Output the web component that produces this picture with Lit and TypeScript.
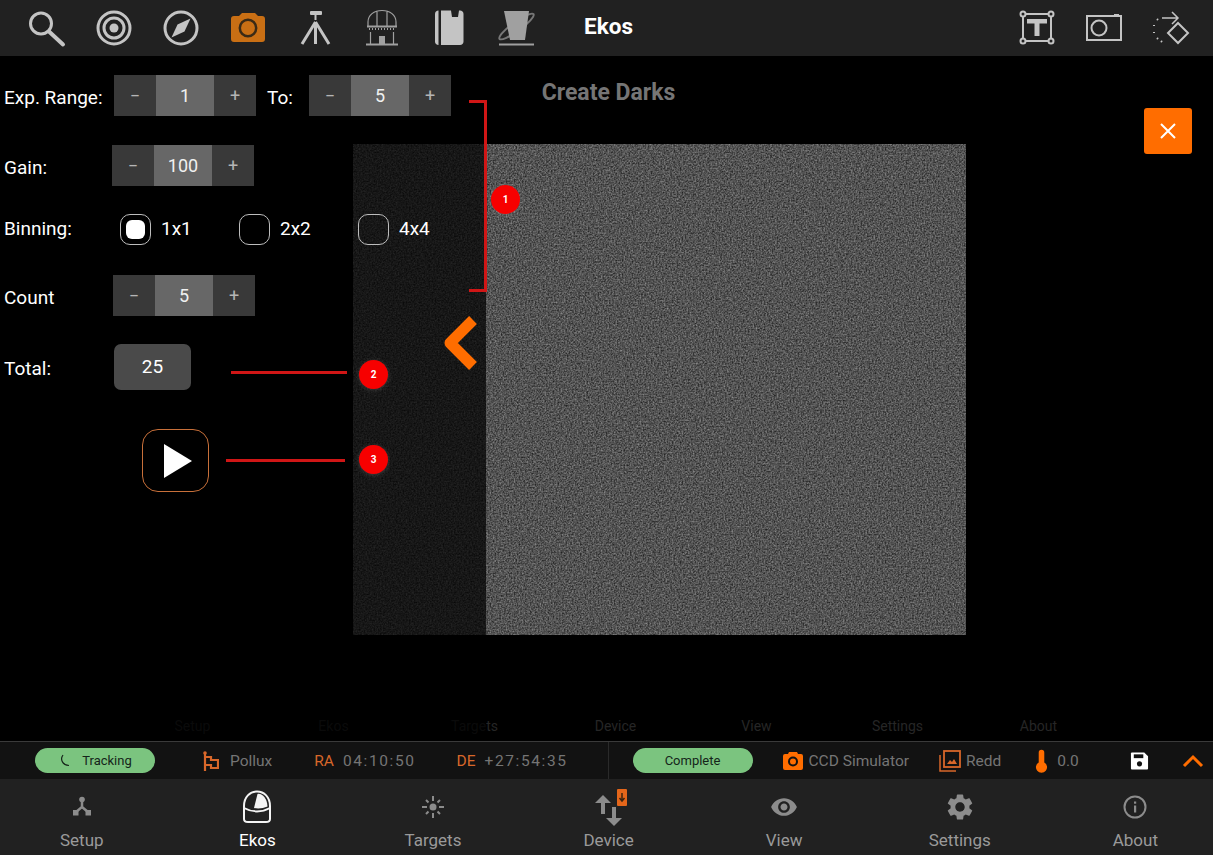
import { LitElement, css, html } from 'lit';
import { customElement } from 'lit/decorators.js';

const topIcons = [
  html`<svg viewBox="0 0 40 40"><circle cx="14" cy="15.5" r="10.5" class="line w3"/><path d="M22 23.5 36 36.5" class="line w4"/></svg>`,
  html`<svg viewBox="0 0 40 40"><circle cx="20" cy="20" r="16" class="line w3"/><circle cx="20" cy="20" r="10" class="line w3"/><circle cx="20" cy="20" r="4.5" class="solid"/></svg>`,
  html`<svg viewBox="0 0 40 40"><circle cx="20" cy="20" r="16" class="line w3"/><path d="M29.5 10.5 23.5 23.5 10.5 29.5 16.5 16.5Z" class="solid"/></svg>`,
  html`<svg viewBox="0 0 40 40" class="on"><path d="M3 11a3 3 0 0 1 3-3h5l2-2 1-1h13l1 1 2 2h4a3 3 0 0 1 3 3v20a3 3 0 0 1-3 3H6a3 3 0 0 1-3-3Z" class="solid"/><circle cx="20" cy="20" r="8.2" class="ring"/></svg>`,
  html`<svg viewBox="0 0 40 40"><rect x="15" y="3" width="12" height="4" rx="1" class="solid"/><rect x="19.500" y="7" width="2" height="5" class="solid"/><path d="M20.500 14 7 36M20.500 14V36M20.500 14 34 36" class="line w3"/></svg>`,
  html`<svg viewBox="0 0 40 40" class="dim"><path d="M6 18V14C6 7 12 2.500 20 2.500S34 7 34 14V18M15 3V18M25 3V18M8.500 24V36M31.500 24V36" class="line w12"/><path d="M5 18.500H35" class="line w2"/><path d="M7 21H33" class="line w2 dash"/><rect x="17" y="28" width="6" height="8" class="solid"/><path d="M4 36.500H36" class="line w2"/></svg>`,
  html`<svg viewBox="0 0 40 40"><path d="M9.500 2.500V37C7.500 37 6 35.500 6 33.500V6C6 4 7.500 2.500 9.500 2.500Z" class="solid"/><path d="M12 2.500H22L23 9H29L30 2.500H31C33 2.500 34.500 4 34.500 6V33.500C34.500 35.500 33 37 31 37H12Z" class="solid"/></svg>`,
  html`<svg viewBox="0 0 40 40" class="dim"><ellipse cx="20.500" cy="18.500" rx="21" ry="4.500" transform="rotate(-36 20.500 18.500)" class="line w2 orbit"/><path d="M8 3H33L29 32H14Z" class="solid"/><path d="M3 36.500H38" class="line w2"/></svg>`,
];

const rightIcons = [
  html`<svg viewBox="0 0 40 40"><rect x="6" y="6" width="28" height="27" class="line w2"/><circle cx="6" cy="6" r="2.500" class="dot"/><circle cx="34" cy="6" r="2.500" class="dot"/><circle cx="6" cy="33" r="2.500" class="dot"/><circle cx="34" cy="33" r="2.500" class="dot"/><rect x="10" y="11" width="20" height="4.500" class="solid"/><rect x="17.500" y="11" width="5" height="17" class="solid"/></svg>`,
  html`<svg viewBox="0 0 40 40"><rect x="3" y="8" width="34" height="24" class="line w2"/><rect x="30" y="6" width="5" height="2" class="solid"/><circle cx="15" cy="20" r="7.500" class="line w2"/></svg>`,
  html`<svg viewBox="0 0 40 40"><path d="M27 15 37 25 27 35 17 25Z" class="line w2"/><path d="M11 10H27M21 4 27 10 21 16" class="line w15"/><path d="M6 11 7 12M3 17V18M3 24V25M6 30 7 31M10 33 11 34" class="line w2"/></svg>`,
];

const navIcons = [
  html`<svg viewBox="0 0 34 34"><circle cx="17" cy="9.500" r="2.800" class="solid"/><path d="M17 11V17L11 22M17 17 23 22" class="line w25"/><rect x="8" y="20" width="5.500" height="5.500" class="solid"/><rect x="20.500" y="20" width="5.500" height="5.500" class="solid"/></svg>`,
  html`<svg viewBox="0 0 34 34" class="bright"><path d="M4 16C4 7 10 1.500 17 1.500S30 7 30 16V29C30 31 28 32 26 32H8C6 32 4 31 4 29Z" class="line w2"/><path d="M4 18C12 22.500 22 22.500 30 18" class="line w2"/><path d="M14 18 17.500 4C22 3 27 8 27.500 16.500 23 18.500 18 19 14 18Z" class="solid"/></svg>`,
  html`<svg viewBox="0 0 34 34"><circle cx="17" cy="17" r="3.500" class="solid"/><path d="M17 6V11M17 23V28M6 17H11M23 17H28M10 10 12.500 12.500M24 10 21.500 12.500M10 24 12.500 21.500M24 24 21.500 21.500" class="line w2"/></svg>`,
  html`<svg viewBox="0 0 50 40" class="device"><path d="M19 8 11 16H17V27H21V16H27Z" class="solid"/><path d="M30 39 38 31H32V20H28V31H22Z" class="solid"/><rect x="33" y="2" width="10" height="17" rx="1" class="orange"/><path d="M38 6V13M35.500 11 38 14 40.500 11" class="badge-arrow"/></svg>`,
  html`<svg viewBox="-2.500 -2.500 29 29"><path class="solid" d="M12 4.500C7 4.500 2.730 7.610 1 12c1.730 4.390 6 7.500 11 7.500s9.270-3.110 11-7.500c-1.730-4.390-6-7.500-11-7.500zM12 17c-2.760 0-5-2.240-5-5s2.240-5 5-5 5 2.240 5 5-2.240 5-5 5zm0-8c-1.660 0-3 1.340-3 3s1.340 3 3 3 3-1.340 3-3-1.340-3-3-3z"/></svg>`,
  html`<svg viewBox="-1 -1 26 26"><path class="solid" d="M19.140 12.940c.04-.3.06-.61.06-.94 0-.32-.02-.64-.07-.94l2.030-1.580c.18-.14.23-.41.12-.61l-1.920-3.320c-.12-.22-.37-.29-.59-.22l-2.390.96c-.5-.38-1.030-.7-1.620-.94l-.36-2.540c-.04-.24-.24-.41-.48-.41h-3.840c-.24 0-.43.17-.47.41l-.36 2.540c-.59.24-1.130.57-1.620.94l-2.390-.96c-.22-.08-.47 0-.59.22L2.740 8.870c-.12.21-.08.47.12.61l2.030 1.580c-.05.3-.09.63-.09.94s.02.64.07.94l-2.030 1.580c-.18.14-.23.41-.12.61l1.920 3.320c.12.22.37.29.59.22l2.390-.96c.5.38 1.030.7 1.620.94l.36 2.540c.05.24.24.41.48.41h3.840c.24 0 .44-.17.47-.41l.36-2.540c.59-.24 1.130-.56 1.620-.94l2.390.96c.22.08.47 0 .59-.22l1.920-3.320c.12-.22.07-.47-.12-.61l-2.010-1.580zM12 15.600c-1.980 0-3.600-1.620-3.600-3.600s1.620-3.600 3.600-3.600 3.600 1.620 3.600 3.600-1.620 3.600-3.600 3.600z"/></svg>`,
  html`<svg viewBox="0 0 34 34"><circle cx="17" cy="17" r="10.500" class="line w2"/><rect x="16" y="15.500" width="2.200" height="7" class="solid"/><rect x="16" y="11.500" width="2.200" height="2.200" class="solid"/></svg>`,
];

const navItems = ['Setup', 'Ekos', 'Targets', 'Device', 'View', 'Settings', 'About'];

@customElement('app-root')
export class AppRoot extends LitElement {
  static styles = css`
    :host {
      display: flex;
      flex-direction: column;
      width: 1213px;
      height: 855px;
      overflow: hidden;
      background: #000;
      font-family: Roboto, 'Liberation Sans', sans-serif;
      color: #fff;
    }

    svg .line { fill: none; stroke: currentColor; }
    svg .solid { fill: currentColor; }
    svg .w12 { stroke-width: 1.2; }
    svg .w15 { stroke-width: 1.5; }
    svg .w2 { stroke-width: 2; }
    svg .w25 { stroke-width: 2.5; }
    svg .w3 { stroke-width: 3; }
    svg .w4 { stroke-width: 4; stroke-linecap: round; }
    svg .dash { stroke-dasharray: 1 2; }
    svg .orbit { stroke: #777; }
    svg .dot { fill: #212121; stroke: currentColor; stroke-width: 2; }
    svg .ring { fill: none; stroke: #3a2a16; stroke-width: 2.5; }
    svg .orange { fill: #e4661a; }
    svg .badge-arrow { fill: none; stroke: #3a2410; stroke-width: 1.5; }

    .topbar {
      flex: none;
      height: 56px;
      display: flex;
      align-items: center;
      padding-left: 13px;
      background: #212121;
    }
    .topicon {
      width: 67px;
      height: 56px;
      display: flex;
      align-items: center;
      justify-content: center;
      color: #c4c4c4;
    }
    .topicon svg { width: 40px; height: 40px; }
    .topicon svg.on { color: #c96f14; }
    .topicon svg.dim { color: #a0a0a0; }
    .app-title {
      margin: -4px 0 0 35px;
      font-size: 22.5px;
      font-weight: 700;
    }
    .topright {
      margin-left: auto;
      margin-right: 9px;
      display: flex;
    }

    .main {
      flex: 1;
      position: relative;
      display: flex;
      flex-direction: column;
      background: #000;
    }
    .dialog-title {
      margin: 22px 0 0;
      height: 28px;
      text-align: center;
      padding-left: 4px;
      font-size: 23px;
      line-height: 30px;
      font-weight: 700;
      color: #757575;
    }
    .picture {
      margin: 38px 0 0 353px;
      width: 613px;
      height: 491px;
      display: block;
    }
    .ghost {
      margin: auto 0 8px 122px;
      display: grid;
      grid-template-columns: repeat(7, 141px);
      height: 14px;
      font-size: 14px;
      line-height: 14px;
      text-align: center;
      color: #262626;
    }

    .drawer {
      position: absolute;
      left: 0;
      top: 0;
      bottom: 0;
      width: 486px;
      box-sizing: border-box;
      padding: 19px 0 0 4px;
      display: flex;
      flex-direction: column;
      background: rgba(0, 0, 0, 0.72);
      font-size: 19px;
    }
    .row {
      display: flex;
      align-items: center;
      height: 41px;
    }
    .row.gain { margin-top: 29px; }
    .row.binning { margin-top: 28px; height: 31px; }
    .row.count { margin-top: 30px; }
    .row.total { margin-top: 28px; height: 46px; }
    .label { width: 110px; flex: none; margin-top: 4px; }
    .gain .label { width: 108px; }
    .count .label { width: 109px; }
    .binning .label { width: 116px; margin-top: -2px; }
    .total .label { margin-top: 2px; }
    .to-label { margin: 4px 15px 0 11px; width: 27px; }

    .stepper {
      display: grid;
      grid-template-columns: 42px 58px 42px;
      height: 41px;
      line-height: 41px;
      text-align: center;
      background: #393939;
      color: #b5b5b5;
      font-size: 18px;
    }
    .stepper b {
      font-weight: 400;
      font-size: 18px;
      background: #676767;
      color: #f0f0f0;
    }

    .bin {
      display: flex;
      align-items: center;
      width: 119px;
      line-height: 27px;
    }
    .box {
      width: 31px;
      height: 31px;
      box-sizing: border-box;
      border: 1px solid #bdbdbd;
      border-radius: 10px;
      margin-right: 10px;
      padding: 5px;
    }
    .box span {
      display: block;
      width: 100%;
      height: 100%;
      background: #fff;
      border-radius: 6px;
    }
    .bin-text { margin-top: -3px; }

    .total-value {
      width: 77px;
      height: 46px;
      line-height: 46px;
      text-align: center;
      background: #4a4a4a;
      border-radius: 7px;
    }
    .play {
      margin: 39px 0 0 138px;
      width: 67px;
      height: 63px;
      box-sizing: border-box;
      border: 1.5px solid #c8703a;
      border-radius: 16px;
      display: flex;
      align-items: center;
      justify-content: center;
    }
    .play svg { width: 30px; height: 36px; fill: #fff; margin-left: 5px; }

    .chevron {
      position: absolute;
      left: 440px;
      top: 258px;
      width: 42px;
      height: 58px;
      fill: none;
      stroke: #ff6d00;
      stroke-width: 11;
      stroke-linejoin: round;
    }
    .close {
      position: absolute;
      left: 1144px;
      top: 52px;
      width: 48px;
      height: 46px;
      border-radius: 3px;
      background: #ff6d00;
      display: flex;
      align-items: center;
      justify-content: center;
    }
    .close svg { width: 16px; height: 16px; stroke: #fff; stroke-width: 2; }

    .bracket {
      position: absolute;
      left: 469px;
      top: 44px;
      width: 15px;
      height: 186px;
      border: 3px solid #d01616;
      border-left: 0;
    }
    .rule {
      position: absolute;
      height: 3px;
      background: #d01616;
    }
    .rule.two { left: 231px; width: 116px; top: 315px; }
    .rule.three { left: 226px; width: 119px; top: 403px; }
    .marker {
      position: absolute;
      width: 29px;
      height: 29px;
      border-radius: 50%;
      background: #f70000;
      box-shadow: 0 1px 5px rgba(255, 255, 255, 0.18);
      text-align: center;
      line-height: 29px;
      font-size: 10px;
      font-weight: 700;
    }
    .marker.one { left: 491px; top: 129px; }
    .marker.two { left: 359px; top: 304px; }
    .marker.three { left: 359px; top: 389px; }

    .status {
      flex: none;
      height: 37px;
      display: flex;
      align-items: center;
      background: #121212;
      border-top: 1px solid #3a3a3a;
      font-size: 15.5px;
      color: #757575;
    }
    .status > * { flex: none; }
    .pill {
      width: 120px;
      height: 25px;
      line-height: 25px;
      border-radius: 13px;
      background: #7bc47f;
      color: #15241a;
      font-size: 13px;
      text-align: center;
      display: flex;
      align-items: center;
      justify-content: center;
      gap: 11px;
    }
    .pill svg { width: 13px; height: 15px; fill: none; stroke: #15241a; stroke-width: 1.2; }
    .pill.track { margin-left: 35px; }
    .pill.done { margin-left: 24px; }
    .status svg.st { color: #ff6d00; }
    .status svg.soft { color: #d8672a; }
    .tag { color: #d8672a; margin-right: 9px; }
    .coord { letter-spacing: 1.6px; }
    .divider { width: 1px; height: 37px; background: #2a2a2a; margin-left: 40px; }
    .flag { width: 17px; height: 20px; margin: 0 11px 0 47px; }
    .ra { margin-left: 42px; }
    .de { margin-left: 41px; }
    .ccd { width: 20px; height: 20px; margin: 0 6px 0 30px; }
    .stack { width: 22px; height: 22px; margin: 0 5px 0 30px; }
    .temp { width: 13px; height: 24px; margin: 0 9px 0 34px; }
    .status svg.save { width: 19px; height: 20px; margin-left: 51px; color: #fff; }
    .up { width: 22px; height: 14px; margin-left: 33px; }

    .nav {
      flex: none;
      height: 76px;
      margin-left: -6px;
      display: grid;
      grid-template-columns: repeat(7, 175.6px);
      background: #212121;
      box-shadow: 7px 0 0 #212121;
    }
    .tab {
      display: flex;
      flex-direction: column;
      align-items: center;
      color: #9a9a9a;
      font-size: 17px;
    }
    .tab .glyph {
      height: 36px;
      margin-top: 10px;
      color: #8c8c8c;
      display: flex;
      align-items: center;
    }
    .tab svg { width: 34px; height: 34px; }
    .tab svg.device { width: 50px; height: 40px; }
    .tab svg.bright { color: #f4f4f4; }
    .tab span { margin-top: 5px; line-height: 20px; }
    .tab.active { color: #fff; }
  `;

  private stepper(value: string) {
    return html`<div class="stepper"><span>−</span><b>${value}</b><span>+</span></div>`;
  }

  private bin(text: string, checked = false) {
    return html`<div class="bin">
      <div class="box">${checked ? html`<span></span>` : ''}</div>
      <div class="bin-text">${text}</div>
    </div>`;
  }

  render() {
    return html`
      <header class="topbar">
        ${topIcons.map((i) => html`<div class="topicon">${i}</div>`)}
        <div class="app-title">Ekos</div>
        <div class="topright">
          ${rightIcons.map((i) => html`<div class="topicon">${i}</div>`)}
        </div>
      </header>

      <main class="main">
        <h2 class="dialog-title">Create Darks</h2>
        <svg class="picture" viewBox="0 0 613 491">
          <filter id="grain" x="0" y="0" width="100%" height="100%" color-interpolation-filters="sRGB">
            <feTurbulence type="fractalNoise" baseFrequency="0.62" numOctaves="2" seed="4" />
            <feColorMatrix
              type="matrix"
              values="0.55 0 0 0 0.05  0.55 0 0 0 0.05  0.55 0 0 0 0.05  0 0 0 0 1"
            />
            <feGaussianBlur stdDeviation="0.35" />
          </filter>
          <rect width="613" height="491" filter="url(#grain)" />
        </svg>
        <div class="ghost">${navItems.map((n) => html`<div>${n}</div>`)}</div>

        <section class="drawer">
          <div class="row">
            <div class="label">Exp. Range:</div>
            ${this.stepper('1')}
            <div class="to-label">To:</div>
            ${this.stepper('5')}
          </div>
          <div class="row gain"><div class="label">Gain:</div>${this.stepper('100')}</div>
          <div class="row binning">
            <div class="label">Binning:</div>
            ${this.bin('1x1', true)} ${this.bin('2x2')} ${this.bin('4x4')}
          </div>
          <div class="row count"><div class="label">Count</div>${this.stepper('5')}</div>
          <div class="row total"><div class="label">Total:</div><div class="total-value">25</div></div>
          <div class="play"><svg viewBox="0 0 30 36"><path d="M1 1 29 18 1 35Z" /></svg></div>
        </section>

        <svg class="chevron" viewBox="0 0 42 58"><path d="M33 6 10 29 33 52" /></svg>
        <div class="close"><svg viewBox="0 0 16 16"><path d="M1 1 15 15M15 1 1 15" /></svg></div>

        <div class="bracket"></div>
        <div class="rule two"></div>
        <div class="rule three"></div>
        <div class="marker one">1</div>
        <div class="marker two">2</div>
        <div class="marker three">3</div>
      </main>

      <div class="status">
        <div class="pill track">
          <svg viewBox="0 0 13 15"><path d="M5 2C2 6 4 12 11 12.500" /></svg>
          Tracking
        </div>
        <svg class="st soft flag" viewBox="0 0 17 20"><circle cx="3" cy="2" r="1.800" fill="currentColor" /><path d="M3 2V20M3 6H9V9H16V17H9V14H3" fill="none" stroke="currentColor" stroke-width="2.200" /></svg>
        <span>Pollux</span>
        <span class="ra tag">RA</span><span class="coord">04:10:50</span>
        <span class="de tag">DE</span><span class="coord">+27:54:35</span>
        <div class="divider"></div>
        <div class="pill done">Complete</div>
        <svg class="st ccd" viewBox="0 0 20 20"><path d="M0 5a2 2 0 0 1 2-2h3l1-2h8l1 2h3a2 2 0 0 1 2 2v12a2 2 0 0 1-2 2H2a2 2 0 0 1-2-2Z" fill="currentColor" /><circle cx="10" cy="10.500" r="4" fill="none" stroke="#121212" stroke-width="2" /></svg>
        <span>CCD Simulator</span>
        <svg class="st soft stack" viewBox="0 0 22 22"><rect x="5" y="1" width="16" height="16" fill="none" stroke="currentColor" stroke-width="1.800" /><path d="M1 5V21H17" fill="none" stroke="currentColor" stroke-width="1.500" /><path d="M8 14 11 10 13 12 15 9 18 14Z" fill="currentColor" /></svg>
        <span>Redd</span>
        <svg class="st temp" viewBox="0 0 14 24"><path d="M4 3a3 3 0 0 1 6 0V13.500a6 6 0 1 1-6 0Z" fill="currentColor" /></svg>
        <span>0.0</span>
        <svg class="st save" viewBox="0 0 20 20"><path d="M1 2a1 1 0 0 1 1-1H15L19 5V18a1 1 0 0 1-1 1H2a1 1 0 0 1-1-1Z" fill="currentColor" /><rect x="4" y="3" width="10" height="4" fill="#121212" /><circle cx="10" cy="13" r="2.700" fill="#121212" /></svg>
        <svg class="st up" viewBox="0 0 22 14"><path d="M2 12 11 3 20 12" fill="none" stroke="currentColor" stroke-width="3" /></svg>
      </div>

      <nav class="nav">
        ${navItems.map(
          (n, i) => html`<div class="tab ${i === 1 ? 'active' : ''}">
            <div class="glyph">${navIcons[i]}</div>
            <span>${n}</span>
          </div>`,
        )}
      </nav>
    `;
  }
}
